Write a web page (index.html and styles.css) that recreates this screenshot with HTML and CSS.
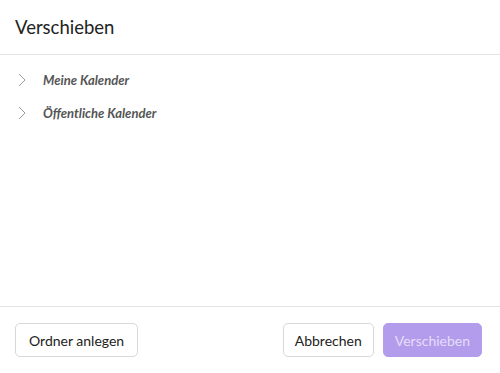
FILE: index.html
```html
<!DOCTYPE html>
<html lang="de">
<head>
    <meta charset="UTF-8">
    <meta name="viewport" content="width=device-width, initial-scale=1.0">
    <title>Verschieben</title>
    <link rel="stylesheet" href="styles.css">
</head>
<body>
    <div class="dialog">
        <div class="dialog-header">Verschieben</div>

        <div class="dialog-body">
            <div class="tree-item">
                <svg class="chevron" width="8" height="14" viewBox="0 0 8 14"><path d="M1 1 L7 7 L1 13" fill="none" stroke="#9a9a9a" stroke-width="1"/></svg>
                <span>Meine Kalender</span>
            </div>
            <div class="tree-item">
                <svg class="chevron" width="8" height="14" viewBox="0 0 8 14"><path d="M1 1 L7 7 L1 13" fill="none" stroke="#9a9a9a" stroke-width="1"/></svg>
                <span>Öffentliche Kalender</span>
            </div>
        </div>

        <div class="dialog-footer">
            <button class="btn btn-wide">Ordner anlegen</button>
            <div class="spacer"></div>
            <button class="btn">Abbrechen</button>
            <button class="btn btn-primary" disabled>Verschieben</button>
        </div>
    </div>
</body>
</html>
```

FILE: styles.css
```css
body {
    margin: 0;
    font-family: Lato, "Open Sans", sans-serif;
    background: #fff;
    color: #222;
}
.dialog {
    width: 500px;
    height: 373px;
    display: flex;
    flex-direction: column;
}
.dialog-header {
    height: 55px;
    box-sizing: border-box;
    padding: 0 15px;
    display: flex;
    align-items: center;
    font-size: 18.5px;
    color: #222;
    border-bottom: 1px solid #e4e4e4;
}
.dialog-body {
    flex: 1;
    padding: 8px 0 0 0;
}
.tree-item {
    height: 33px;
    display: flex;
    align-items: center;
    padding-left: 18px;
}
.chevron {
    margin-right: 17px;
}
.tree-item span {
    font-size: 13px;
    font-weight: bold;
    font-style: italic;
    color: #555;
}
.dialog-footer {
    height: 67px;
    box-sizing: border-box;
    border-top: 1px solid #e4e4e4;
    display: flex;
    align-items: center;
    padding: 0 18px 0 15px;
}
.spacer {
    flex: 1;
}
.btn {
    font-family: Lato, "Open Sans", sans-serif;
    font-size: 14px;
    height: 34px;
    padding: 0 11px;
    margin-left: 9px;
    background: #fff;
    color: #222;
    border: 1px solid #d8d8d8;
    border-radius: 5px;
}
.btn-wide {
    margin-left: 0;
    padding: 0 13px;
}
.btn-primary {
    background: #b49cec;
    border-color: #b49cec;
    color: #e4dcfa;
}
```
